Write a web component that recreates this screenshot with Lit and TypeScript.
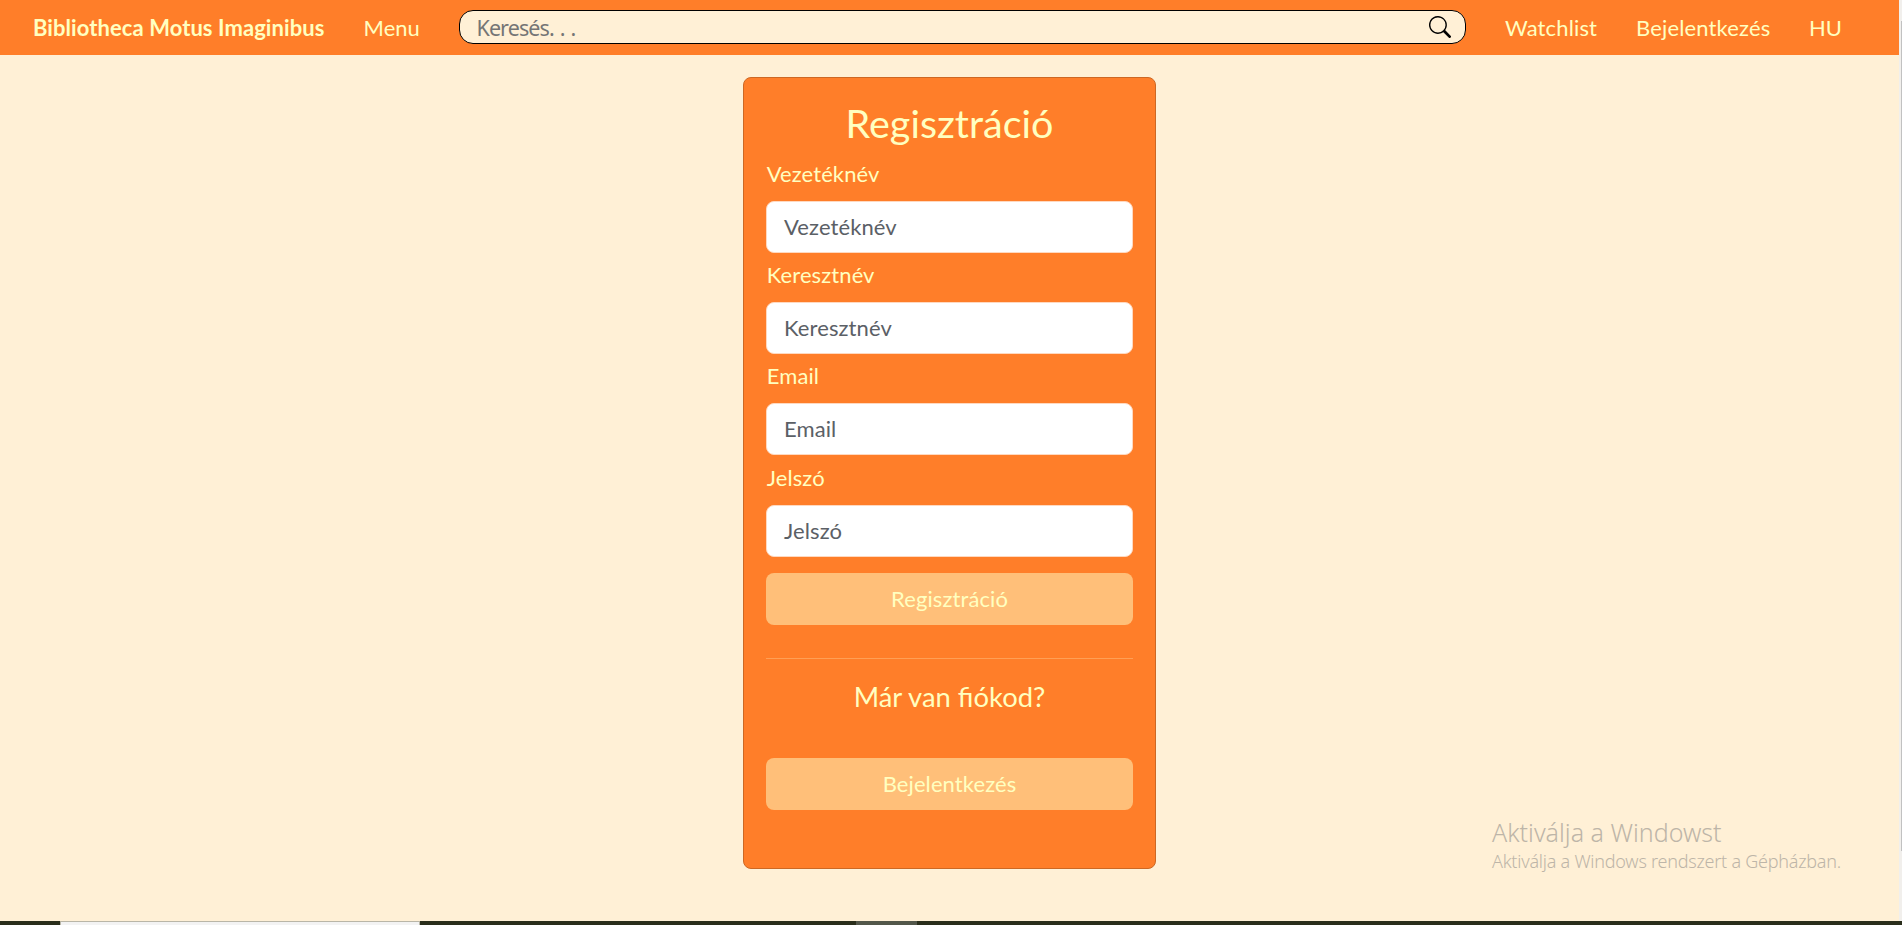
import { LitElement, html, css } from "lit";
import { customElement } from "lit/decorators.js";

@customElement("app-root")
export class AppRoot extends LitElement {
  static styles = css`
    :host {
      display: flex;
      flex-direction: column;
      height: 925px;
      position: relative;
      overflow: hidden;
      background: #fff0d6;
      color: #ffffc0;
      font: 22px/33px Lato, sans-serif;
    }
    * { box-sizing: border-box; }
    .view { flex: 1; display: flex; min-height: 0; }
    .page { flex: 1; min-width: 0; }
    .scroll { width: 3px; background: #f1efec; padding: 21px 0 70px 2px; }
    .thumb { height: 100%; background: #c1c1c1; }
    nav { height: 55px; background: #ff7e29; display: flex; align-items: center; padding: 0 0 0 33px; white-space: nowrap; }
    .brand { font-weight: 700; width: 330.6px; flex: none; letter-spacing: 0.07px; }
    .menu { width: 95.4px; flex: none; }
    .search { width: 1007px; flex: none; height: 34px; margin-top: -1px; display: flex; align-items: center; justify-content: space-between; padding: 0 14px 0 16.5px; border: 1px solid #000; border-radius: 14px; background: #fff0d6; color: #757575; font-family: "Noto Sans", sans-serif; font-size: 21.5px; margin-right: 39px; }
    .hint { letter-spacing: -0.9px; }
    .dots { letter-spacing: -0.3px; }
    .watch { width: 131px; flex: none; letter-spacing: 0.15px; }
    .login { width: 173px; flex: none; letter-spacing: 0.15px; }
    .card { width: 413px; height: 792px; margin: 22px auto 0 743px; padding: 22px; border: 1px solid #cd6824; border-radius: 8px; background: #ff7e29; display: flex; flex-direction: column; }
    h1 { font-size: 39.5px; line-height: 46px; font-weight: 400; margin: 0 0 13px; text-align: center; }
    .field { display: flex; flex-direction: column; flex: none; height: 101.2px; letter-spacing: 0.1px; }
    .field:nth-of-type(4) { height: 110.4px; }
    label { height: 44px; line-height: 34px; margin-top: -2px; padding-left: 0.7px; }
    .input { height: 52px; flex: none; border: 1px solid #ffd9c0; border-radius: 8px; background: #fff; color: #5b6066; padding: 0 17px; line-height: 50px; }
    .button { height: 52px; flex: none; border-radius: 8px; background: #ffbf79; text-align: center; line-height: 51px; letter-spacing: 0.1px; }
    .rule { height: 1px; background: #ff9f55; margin: 33px 0 21px; flex: none; }
    h2 { font-size: 27.4px; line-height: 34px; font-weight: 400; margin: 0 0 44px; text-align: center; }
    .notice { position: absolute; left: 1492px; top: 815px; color: #bdb5a8; font-family: "Noto Sans", sans-serif; font-weight: 300; white-space: nowrap; }
    .notice-title { font-size: 25px; line-height: 34px; }
    .notice-text { font-size: 18px; line-height: 24px; letter-spacing: -0.24px; }
    .taskbar { height: 4px; background: #2a2e1b; display: flex; padding-left: 60px; gap: 436px; }
    .task { width: 360px; background: #f3f3f3; border: solid #b9b6a8; border-width: 1px 1px 0; }
    .task-idle { width: 61px; background: #53574a; }
  `;

  private fields = ["Vezetéknév", "Keresztnév", "Email", "Jelszó"];

  render() {
    return html`
      <div class="view">
        <div class="page">
          <nav>
            <div class="brand"><span>Bibliotheca Motus Imaginibus</span></div>
            <div class="menu"><span>Menu</span></div>
            <div class="search"><span class="hint">Keresés<span class="dots">. . .</span></span>
              <svg width="22" height="22" viewBox="0 0 16 16" fill="black"><path d="M11.742 10.344a6.5 6.5 0 1 0-1.397 1.398h-.001q.044.06.098.115l3.85 3.85a1 1 0 0 0 1.415-1.414l-3.85-3.85a1 1 0 0 0-.115-.1zM12 6.5a5.5 5.5 0 1 1-11 0 5.5 5.5 0 0 1 11 0"/></svg>
            </div>
            <div class="watch"><span>Watchlist</span></div>
            <div class="login"><span>Bejelentkezés</span></div>
            <div><span>HU</span></div>
          </nav>
          <div class="card">
            <h1><span>Regisztráció</span></h1>
            ${this.fields.map((f) => html`<div class="field"><label><span>${f}</span></label><div class="input"><span>${f}</span></div></div>`)}
            <div class="button"><span>Regisztráció</span></div>
            <div class="rule"></div>
            <h2><span>Már van fiókod?</span></h2>
            <div class="button"><span>Bejelentkezés</span></div>
          </div>
        </div>
        <div class="scroll"><div class="thumb"></div></div>
      </div>
      <div class="taskbar"><div class="task"></div><div class="task-idle"></div></div>
      <div class="notice">
        <div class="notice-title">Aktiválja a Windowst</div>
        <div class="notice-text">Aktiválja a Windows rendszert a Gépházban.</div>
      </div>
    `;
  }
}
